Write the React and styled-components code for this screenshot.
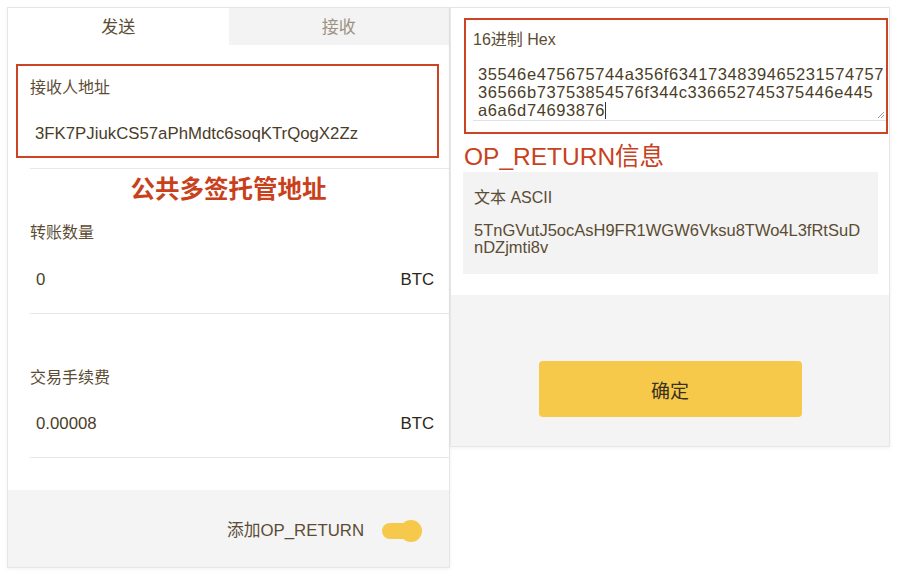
import React from "react"
import styled, { createGlobalStyle } from "styled-components"

const GlobalStyle = createGlobalStyle`
    html, body {
        margin: 0;
        padding: 0;
        background: #fff;
    }
    body {
        font-family: "Liberation Sans", "Noto Sans CJK SC", sans-serif;
        color: #5b4c34;
    }
`;

const Page = styled.div`
    display: flex;
    align-items: flex-start;
    padding: 7px;
    width: 900px;
    height: 577px;
    box-sizing: border-box;
`;

const Phone = styled.section`
    position: relative;
    width: ${p => p.w}px;
    height: ${p => p.h}px;
    box-sizing: border-box;
    border: 1px solid #e6e6e6;
    box-shadow: 0 1px 4px rgba(0, 0, 0, 0.06);
    background: #fff;
    display: flex;
    flex-direction: column;
    overflow: hidden;
`;

const Tabs = styled.div`
    display: grid;
    grid-template-columns: 1fr 1fr;
    height: 37px;
`;

const Tab = styled.div`
    display: flex;
    align-items: center;
    justify-content: center;
    padding-bottom: 3px;
    font-size: 17px;
    background: ${p => (p.active ? "#fff" : "#f3f3f3")};
    color: ${p => (p.active ? "#5b4c34" : "#9b9284")};
`;

const RedBox = styled.div`
    border: 2px solid #cc4424;
    box-sizing: border-box;
`;

const AddressBox = styled(RedBox)`
    margin: 19px 10px 0 8px;
    height: 94px;
    padding: 12px 0 0 12px;
`;

const Label = styled.div`
    font-size: 16px;
    line-height: 20px;
    color: #5b4c34;
`;

const Value = styled.div`
    font-size: 16.8px;
    line-height: 20px;
    color: #4a3d27;
    padding-left: 5px;
    margin-top: ${p => p.top || 26}px;
`;

const Divider = styled.div`
    height: 1px;
    background: #e8e8e8;
    margin: ${p => p.top}px 0 0 22px;
`;

const Note = styled.div`
    font-size: 24.5px;
    line-height: 30px;
    color: #c8411c;
    font-weight: ${p => (p.bold ? 700 : 400)};
    text-align: ${p => p.align || "left"};
`;

const Field = styled.div`
    padding: 0 15px 0 22px;
    margin-top: ${p => p.top}px;
`;

const ValueRow = styled.div`
    display: flex;
    justify-content: space-between;
    align-items: center;
    margin-top: ${p => p.top}px;
    padding-left: 6px;
    font-size: 16.8px;
    line-height: 20px;
    color: #4a3d27;
`;

const Unit = styled.span`
    color: #2c2518;
`;

const Footer = styled.div`
    margin-top: 32px;
    flex: 1;
    background: #f4f4f5;
    display: flex;
    align-items: flex-start;
    justify-content: flex-end;
    padding: 30px 27px 0 0;
`;

const SwitchLabel = styled.span`
    font-size: 16.8px;
    line-height: 22px;
    color: #5b4c34;
    margin-right: 18px;
`;

const Switch = styled.span`
    position: relative;
    display: inline-block;
    width: 40px;
    height: 22px;
    &::before {
        content: "";
        position: absolute;
        left: 0;
        top: 3px;
        width: 34px;
        height: 16px;
        border-radius: 8px;
        background: #f6c84c;
    }
    &::after {
        content: "";
        position: absolute;
        right: 0;
        top: 0;
        width: 22px;
        height: 22px;
        border-radius: 50%;
        background: #f6c84c;
    }
`;

const WhiteSection = styled.div`
    background: #fff;
    padding: 10px 1px 21px 13px;
`;

const HexBox = styled(RedBox)`
    height: 116px;
    padding: 10px 0 0 7px;
`;

const TextArea = styled.div`
    position: relative;
    margin-top: 11px;
    height: 55px;
    padding: 4px 0 0 5px;
    border-bottom: 1px solid #e2e2e2;
    font-size: 16.5px;
    line-height: 18px;
    letter-spacing: 0.6px;
    color: #4a3d27;
`;

const Caret = styled.span`
    display: inline-block;
    width: 1px;
    height: 17px;
    background: #333;
    vertical-align: -3px;
`;

const Grip = styled.svg`
    position: absolute;
    right: 1px;
    bottom: 1px;
`;

const AsciiBox = styled.div`
    margin: 0 10px 0 -1px;
    background: #f3f3f3;
    height: 102px;
    padding: 16px 0 0 11px;
    box-sizing: border-box;
`;

const AsciiText = styled.div`
    margin-top: 14px;
    font-size: 16.5px;
    line-height: 17px;
    color: #5b4c34;
`;

const GraySection = styled.div`
    flex: 1;
    background: #f4f4f5;
    display: flex;
    justify-content: center;
    padding-top: 66px;
`;

const Button = styled.button`
    width: 263px;
    height: 56px;
    border: none;
    border-radius: 4px;
    background: #f6c94b;
    font-family: inherit;
    font-size: 19px;
    color: #3a3020;
`;

export default function App() {
    return (
        <Page>
            <GlobalStyle />

            <Phone w={443} h={561}>
                <Tabs>
                    <Tab active>发送</Tab>
                    <Tab>接收</Tab>
                </Tabs>

                <AddressBox>
                    <Label>接收人地址</Label>
                    <Value>3FK7PJiukCS57aPhMdtc6soqKTrQogX2Zz</Value>
                </AddressBox>
                <Divider top={10} />

                <Note bold align="center" style={{ marginTop: 6 }}>公共多签托管地址</Note>

                <Field top={18}>
                    <Label>转账数量</Label>
                    <ValueRow top={27}>
                        <span>0</span>
                        <Unit>BTC</Unit>
                    </ValueRow>
                </Field>
                <Divider top={23} />

                <Field top={54}>
                    <Label>交易手续费</Label>
                    <ValueRow top={26}>
                        <span>0.00008</span>
                        <Unit>BTC</Unit>
                    </ValueRow>
                </Field>
                <Divider top={23} />

                <Footer>
                    <SwitchLabel>添加OP_RETURN</SwitchLabel>
                    <Switch />
                </Footer>
            </Phone>

            <Phone w={440} h={440}>
                <WhiteSection>
                    <HexBox>
                        <Label>16进制 Hex</Label>
                        <TextArea>
                            35546e475675744a356f6341734839465231574757<br />
                            36566b73753854576f344c336652745375446e445<br />
                            a6a6d74693876<Caret />
                            <Grip width="9" height="9" viewBox="0 0 9 9">
                                <path d="M8 2 L2 8 M8 5 L5 8" stroke="#9a9a9a" strokeWidth="1" />
                            </Grip>
                        </TextArea>
                    </HexBox>
                    <Note style={{ marginTop: 8 }}>OP_RETURN信息</Note>
                    <AsciiBox>
                        <Label>文本 ASCII</Label>
                        <AsciiText>
                            5TnGVutJ5ocAsH9FR1WGW6Vksu8TWo4L3fRtSuD<br />
                            nDZjmti8v
                        </AsciiText>
                    </AsciiBox>
                </WhiteSection>
                <GraySection>
                    <Button>确定</Button>
                </GraySection>
            </Phone>
        </Page>
    )
}
